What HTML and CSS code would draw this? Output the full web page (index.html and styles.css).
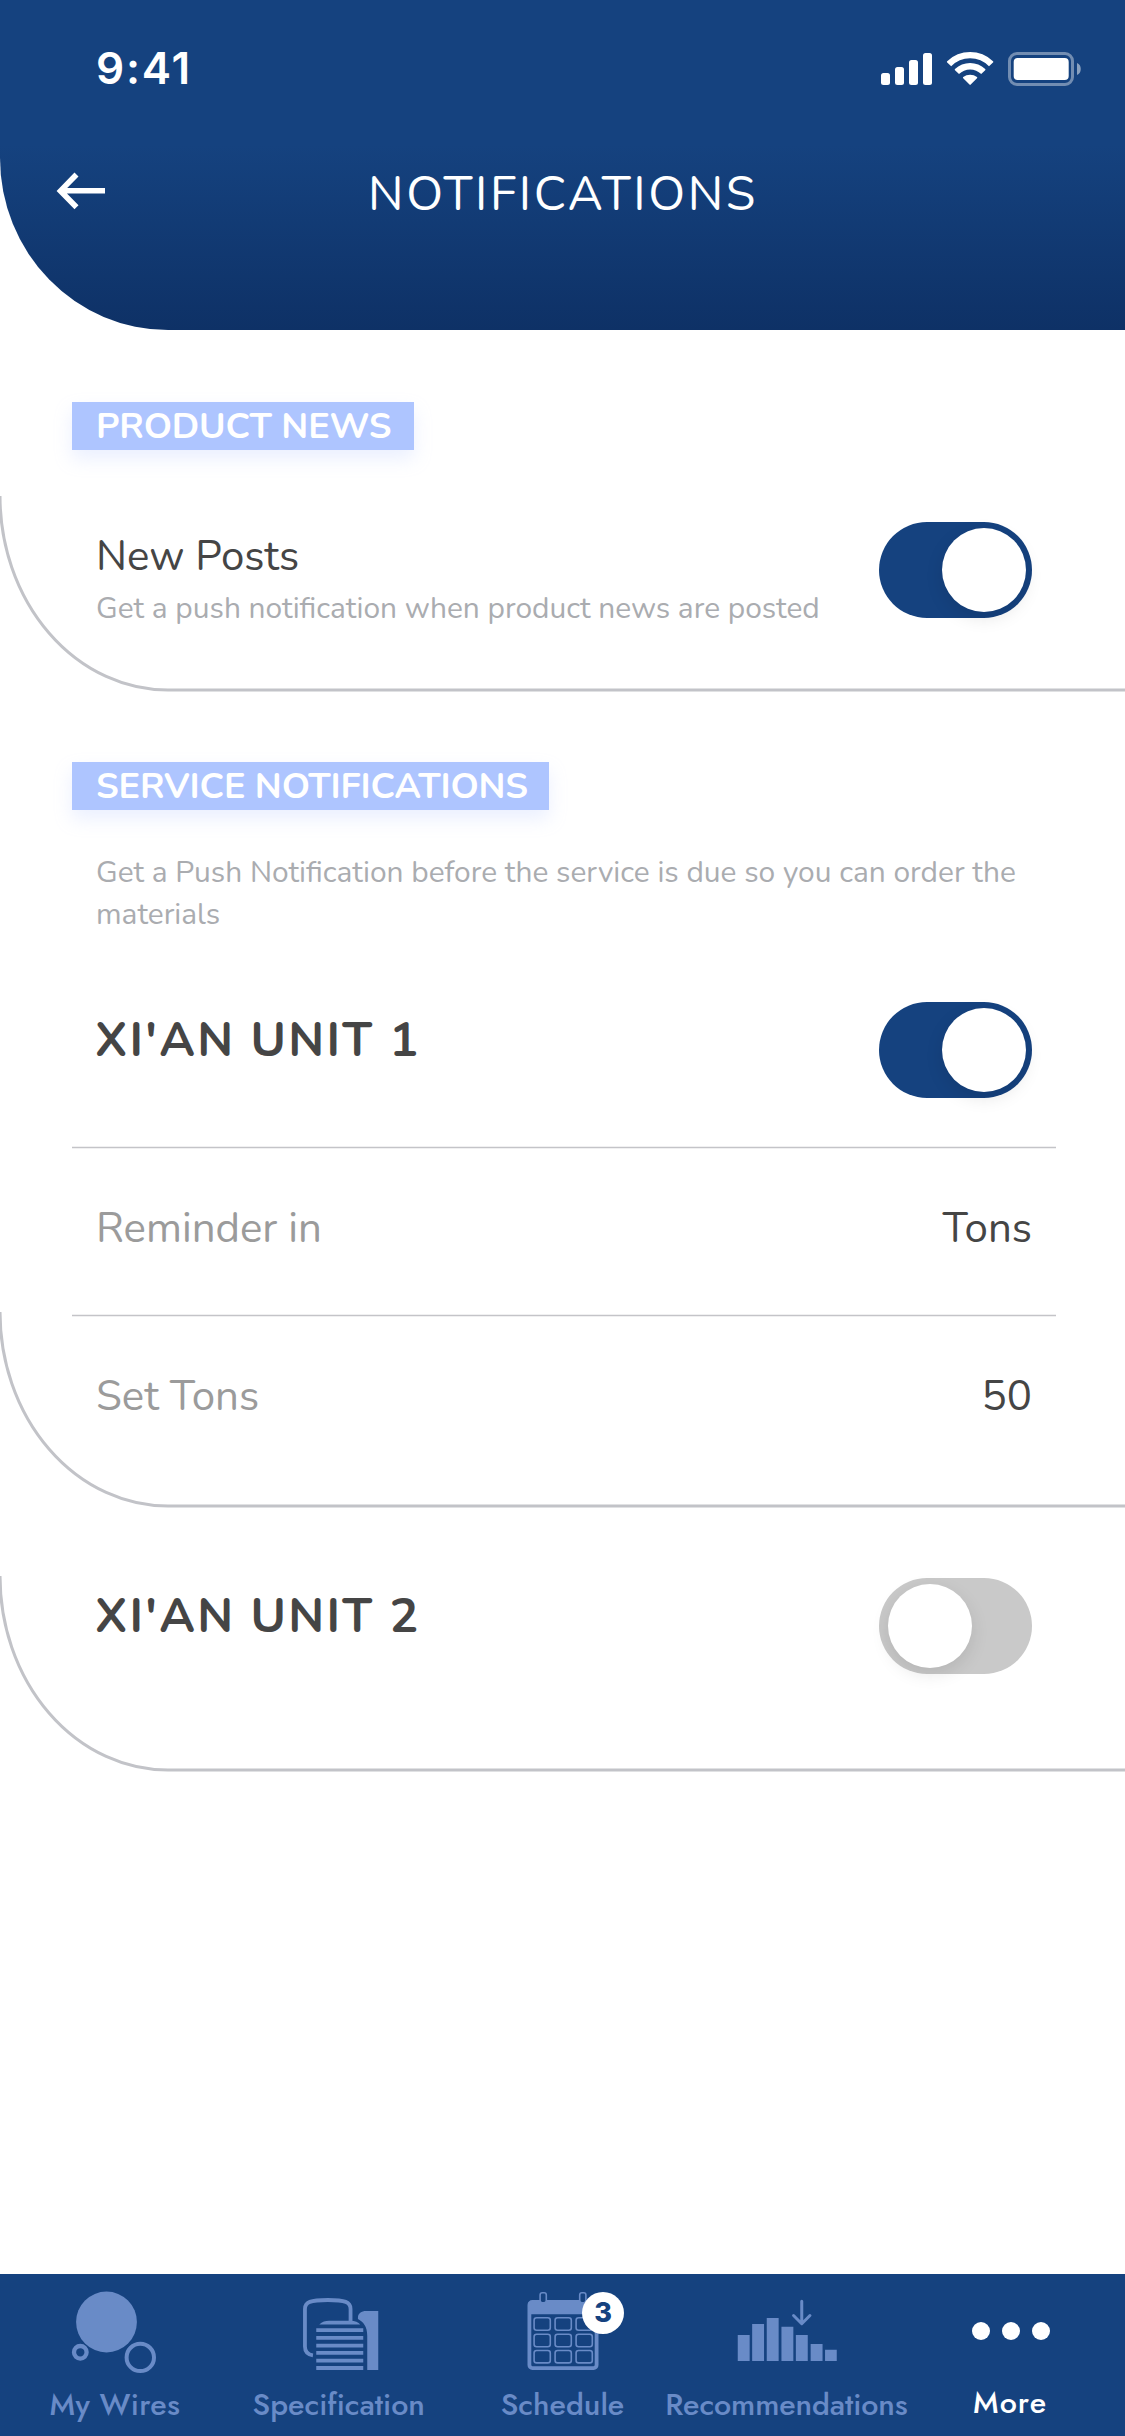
FILE: index.html
```
<!DOCTYPE html>
<html lang="en">
<head>
<meta charset="utf-8">
<title>Notifications</title>
<link rel="stylesheet" href="styles.css">
</head>
<body>
<div class="screen">
  <header class="header">
    <div class="status-bar">
      <span class="time">9:41</span>
      <svg class="status-icons" width="204" height="36" viewBox="880 51 204 36" fill="#fff">
        <rect x="881" y="73" width="9" height="12" rx="2.5"/>
        <rect x="895" y="67" width="9" height="18" rx="2.5"/>
        <rect x="909" y="60" width="9" height="25" rx="2.5"/>
        <rect x="923" y="53" width="9" height="32" rx="2.5"/>
        <path d="M947.2 61.3a32.6 32.6 0 0 1 45.8 0q.6.6 0 1.2l-4 3.8a26 26 0 0 0-37.800 0l-4-3.800q-.6-.6 0-1.200Z"/>
        <path d="M955 69.100a21.800 21.800 0 0 1 30.200 0q.6.6 0 1.200l-4 3.800a15.500 15.500 0 0 0-22.200 0l-4-3.800q-.6-.6 0-1.200Z"/>
        <path d="M963.2 77.100a11.500 11.500 0 0 1 13.800 0q.6.6 0 1.200l-6.300 6.300q-.6.6-1.200 0l-6.300-6.300q-.6-.6 0-1.200Z"/>
        <rect x="1009.500" y="53.500" width="63" height="31" rx="7.500" fill="none" stroke="#fff" stroke-opacity=".4" stroke-width="3"/>
        <rect x="1013.700" y="58" width="55" height="22" rx="4"/>
        <path d="M1077 63c5 1.500 5 10.500 0 12Z" fill-opacity=".5"/>
      </svg>
    </div>
    <div class="title-bar">
      <svg class="back" width="50" height="40" viewBox="56 171 50 40" fill="none" stroke="#fff" stroke-width="5.600">
        <path d="M105 190.700H61M76.500 174.500L60.500 190.900L76.500 207.300"/>
      </svg>
      <h1 class="title">NOTIFICATIONS</h1>
    </div>
  </header>

  <main class="content">
    <section class="card card-news">
      <h2 class="chip chip-news">PRODUCT NEWS</h2>
      <div class="switch-row row-news">
        <div class="post-text">
          <div class="label">New Posts</div>
          <div class="hint">Get a push notification when product news are posted</div>
        </div>
        <span class="toggle on"><span class="knob"></span></span>
      </div>
      <svg class="curve" width="1125" height="196" viewBox="0 0 1125 196"><path d="M0 0A168 194 0 0 0 168 194H1125"/></svg>
    </section>

    <section class="card card-service">
      <h2 class="chip chip-service">SERVICE NOTIFICATIONS</h2>
      <p class="hint description">Get a Push Notification before the service is due so you can order the<br>materials</p>
      <div class="switch-row">
        <h3 class="unit">XI'AN UNIT 1</h3>
        <span class="toggle on"><span class="knob"></span></span>
      </div>
      <div class="fields">
        <div class="field"><span class="field-name">Reminder in</span><span class="value">Tons</span></div>
        <div class="field"><span class="field-name">Set Tons</span><span class="value">50</span></div>
      </div>
      <svg class="curve" width="1125" height="196" viewBox="0 0 1125 196"><path d="M0 0A168 194 0 0 0 168 194H1125"/></svg>
    </section>

    <section class="card card-unit">
      <div class="switch-row">
        <h3 class="unit">XI'AN UNIT 2</h3>
        <span class="toggle"><span class="knob"></span></span>
      </div>
      <svg class="curve" width="1125" height="196" viewBox="0 0 1125 196"><path d="M0 0A168 194 0 0 0 168 194H1125"/></svg>
    </section>
  </main>

  <nav class="tabs">
    <div class="tab">
      <svg class="tab-icon" viewBox="3 0 223.75 108" fill="none" stroke="#698bc7">
        <circle cx="106.500" cy="48" r="30.400" fill="#698bc7" stroke="none"/>
        <circle cx="80.300" cy="78.300" r="6.300" stroke-width="4.300"/>
        <circle cx="140.300" cy="83.400" r="13.700" stroke-width="4"/>
      </svg>
      <span class="tab-label l1">My Wires</span>
    </div>
    <div class="tab">
      <svg class="tab-icon" viewBox="226.75 0 223.75 108" fill="#698bc7">
        <path d="M350.300 47V35C350.300 28 345 26 327.500 26S304.700 28 304.700 35V72.500C304.700 77.500 307 80.500 312.700 81.300" fill="none" stroke="#698bc7" stroke-width="3.800"/>
        <path d="M319 50.500C322 47.500 325 46.700 329 46.700H350C355 46.700 358 48 360 50.500Z"/>
        <path d="M316 54.300h47v3.700h-47zM316 62h47v3.700h-47zM316 69.700h47v3.700h-47zM316 77h47v3.700h-47zM316 84.700h47v3.700h-47zM316 92h47v4h-47z"/>
        <path d="M378 37H366C361 37 357.700 39.500 357.700 43.500V45C363 48 367 52 367 62V96H378Z"/>
      </svg>
      <span class="tab-label">Specification</span>
    </div>
    <div class="tab">
      <svg class="tab-icon" viewBox="450.5 0 223.75 108" fill="none" stroke="#698bc7">
        <rect x="528.900" y="27.900" width="67.200" height="66.200" rx="3" stroke-width="3.800"/>
        <path d="M528 28h69v12.300h-69z" fill="#698bc7" stroke="none"/>
        <g stroke-width="1.600">
          <rect x="539.600" y="18.800" width="6.200" height="10" rx="2.200" fill="#15427f"/>
          <rect x="579.200" y="18.800" width="6.200" height="10" rx="2.200" fill="#15427f"/>
          <rect x="533.600" y="43.800" width="16.200" height="12.400" rx="2.500"/>
          <rect x="554.600" y="43.800" width="16.200" height="12.400" rx="2.500"/>
          <rect x="575.600" y="43.800" width="16.200" height="12.400" rx="2.500"/>
          <rect x="533.600" y="60.300" width="16.200" height="12.400" rx="2.500"/>
          <rect x="554.600" y="60.300" width="16.200" height="12.400" rx="2.500"/>
          <rect x="575.600" y="60.300" width="16.200" height="12.400" rx="2.500"/>
          <rect x="533.600" y="76.500" width="16.200" height="12.400" rx="2.500"/>
          <rect x="554.600" y="76.500" width="16.200" height="12.400" rx="2.500"/>
          <rect x="575.600" y="76.500" width="16.200" height="12.400" rx="2.500"/>
        </g>
      </svg>
      <span class="badge">3</span>
      <span class="tab-label">Schedule</span>
    </div>
    <div class="tab">
      <svg class="tab-icon" viewBox="674.25 0 223.75 108" fill="#698bc7">
        <path d="M738 61h11.900v26H738zM752.400 50h11.900v37h-11.900zM767 44h11.900v43H767zM781.700 52.700h11.900V87h-11.900zM796.100 61H808v26h-11.900zM810.900 70h11.900v17h-11.900zM825.300 75.700h11.700V87h-11.700z"/>
        <path d="M802 27.200V49M793.800 41.500L802 49.700L810.200 41.500" fill="none" stroke="#698bc7" stroke-width="3" stroke-linecap="round" stroke-linejoin="round"/>
      </svg>
      <span class="tab-label l4">Recommendations</span>
    </div>
    <div class="tab active">
      <svg class="tab-icon" viewBox="898 0 223.75 108" fill="#fff">
        <circle cx="981" cy="57" r="9"/><circle cx="1011" cy="57" r="9"/><circle cx="1041" cy="57" r="9"/>
      </svg>
      <span class="tab-label l5">More</span>
    </div>
  </nav>
</div>
</body>
</html>
```

FILE: styles.css
```
* { box-sizing: border-box; }

body { margin: 0; background: #fff; }

h1, h2, h3, p { margin: 0; font-weight: 400; }

svg { display: block; flex: none; }

.screen {
  width: 1125px;
  height: 2436px;
  display: flex;
  flex-direction: column;
  overflow: hidden;
  font-family: Nunito, Lato, sans-serif;
  color: #454545;
}

.header {
  height: 330px;
  flex: none;
  color: #fff;
  background: linear-gradient(#15427f 0, #15427f 145px, #0e3166 330px);
  border-bottom-left-radius: 168px 172px;
}

.status-bar {
  height: 164px;
  padding: 42px 41px 0 96px;
  display: flex;
  justify-content: space-between;
  align-items: flex-start;
}

.time {
  font: 600 44px/52px Inter, sans-serif;
  letter-spacing: 1.8px;
}

.status-icons { margin-top: 9px; }

.title-bar {
  height: 60px;
  padding: 0 56px;
  display: grid;
  grid-template-columns: 1fr auto 1fr;
  align-items: center;
}

.back { margin-top: -6px; }

.title {
  padding-left: 1px;
  font-size: 48px;
  line-height: 60px;
  letter-spacing: 2.6px;
}

.content { flex: 1; }

.card { position: relative; }
.card-news { height: 362px; padding-top: 72px; }
.card-service { height: 816px; padding-top: 70px; }
.card-unit { height: 264px; padding-top: 70px; }

.curve {
  position: absolute;
  left: 0;
  bottom: 0;
  fill: none;
  stroke: #c2c3c8;
  stroke-width: 3px;
}

.chip {
  height: 48px;
  margin-left: 72px;
  padding-left: 24px;
  background: #aec5ff;
  box-shadow: 0 9px 18px rgba(174, 197, 255, .25);
  color: #fff;
  font-size: 36px;
  font-weight: 700;
  line-height: 50px;
  letter-spacing: -.14px;
  white-space: nowrap;
}

.chip-news { width: 342px; }
.chip-service { width: 477px; }

.switch-row {
  display: flex;
  justify-content: space-between;
  align-items: flex-start;
  padding: 0 93px 0 96px;
}

.row-news { margin-top: 72px; }

.post-text { padding-top: 10px; }

.label, .field {
  font-size: 42px;
  line-height: 50px;
}

.label { margin-bottom: 6px; }

.hint {
  font-size: 29.9px;
  line-height: 42px;
  color: #aaacb0;
  white-space: nowrap;
}

.description {
  margin: 42px 0 66px;
  padding-left: 96px;
}

.unit {
  margin-left: -1px;
  padding-top: 7.5px;
  font-size: 48px;
  font-weight: 700;
  line-height: 60px;
  letter-spacing: 2.25px;
}

.toggle {
  width: 153px;
  height: 96px;
  padding: 6px 9px;
  flex: none;
  display: flex;
  border-radius: 48px;
  background: #c9c9c9;
}

.toggle.on {
  padding: 6px;
  justify-content: flex-end;
  background: #15427f;
}

.knob {
  width: 84px;
  height: 84px;
  border-radius: 50%;
  background: #fff;
  box-shadow: 0 6px 18px rgba(0, 0, 0, .1);
}

.fields { margin: 48px 69px 0 72px; }

.field {
  height: 168px;
  padding: 58px 24px 0;
  display: flex;
  justify-content: space-between;
  background: linear-gradient(#f0f0f1 0 1px, #c4c4c8 1px 2px, #f0f0f1 2px 3px, transparent 3px) no-repeat;
}

.field-name { color: #9b9b9b; }

.tabs {
  height: 162px;
  flex: none;
  padding: 0 3px;
  display: grid;
  grid-template-columns: repeat(5, minmax(0, 1fr));
  background: #15427f;
}

.tab {
  position: relative;
  display: flex;
  flex-direction: column;
  align-items: center;
  color: #698bc7;
}

.tab.active { color: #fff; }

.tab-icon { width: 223.75px; height: 108px; }

.tab-label {
  margin-top: 2px;
  font-family: Jost, Lato, sans-serif;
  font-size: 30.4px;
  font-weight: 500;
  line-height: 40px;
  white-space: nowrap;
}

.l1 { letter-spacing: .3px; }
.l4 { letter-spacing: -.1px; }
.l5 { letter-spacing: 1px; margin-top: 0; }

.badge {
  position: absolute;
  top: 18px;
  left: 131.5px;
  width: 42px;
  height: 42px;
  border-radius: 50%;
  background: #fff;
  color: #15427f;
  font: 800 27px/41px Inter, sans-serif;
  text-align: center;
}
```
